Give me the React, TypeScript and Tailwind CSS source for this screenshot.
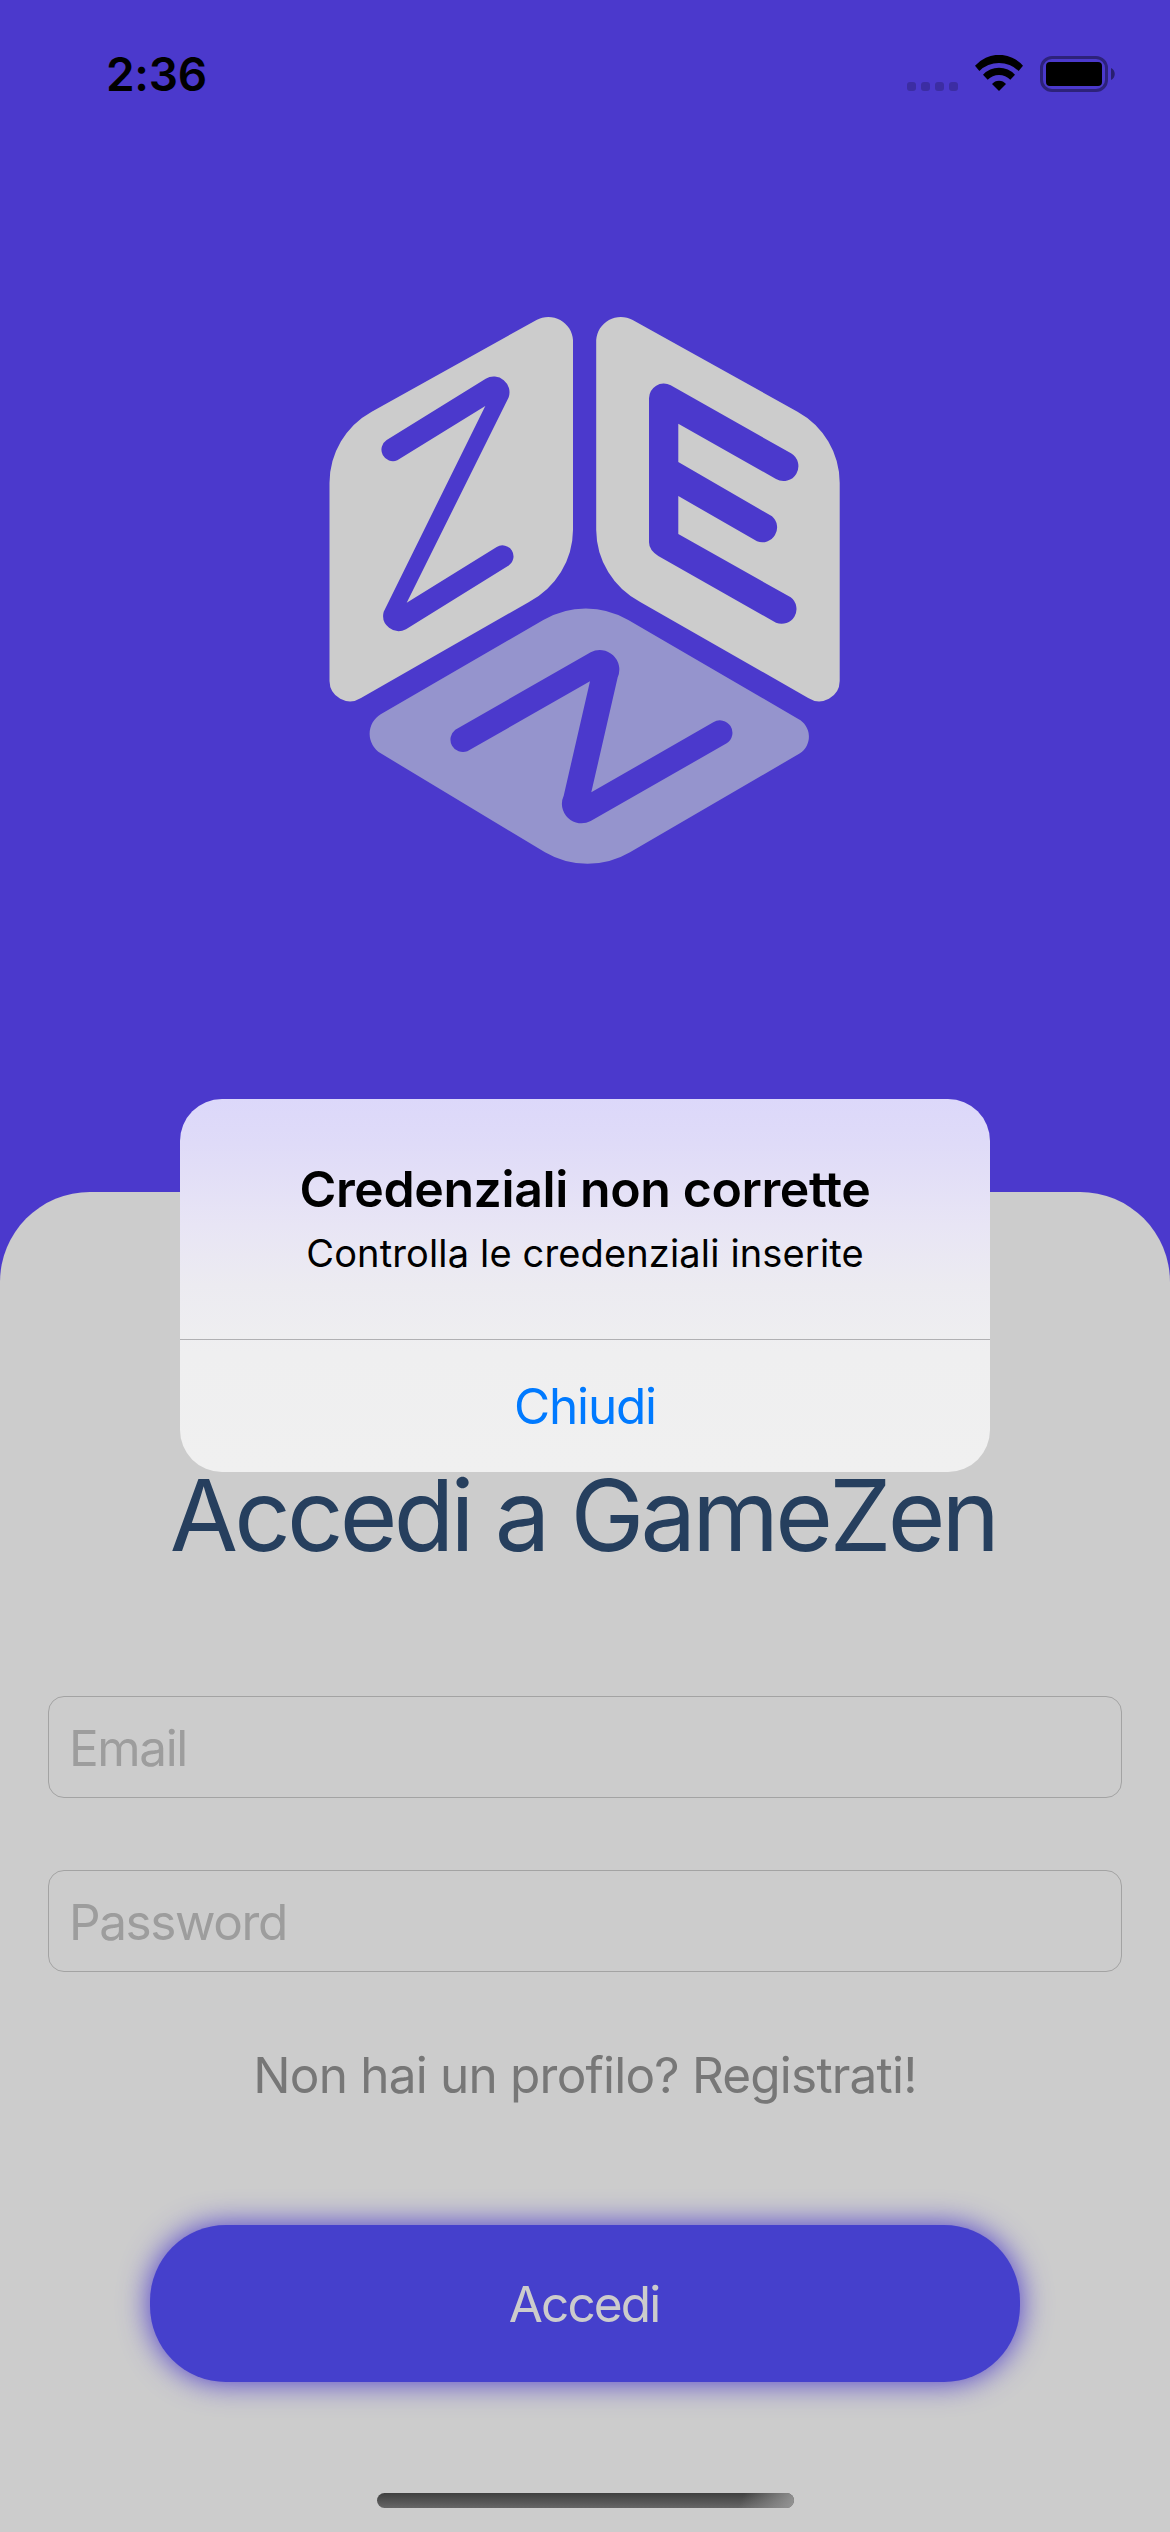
function StatusBar() {
  return (
    <div className="flex h-[148px] items-center justify-between pl-[106px] pr-[55px]">
      <span className="text-[46px] font-semibold leading-[60px] tracking-[-0.3px] text-black">2:36</span>
      <div className="flex items-center">
        <div className="mr-[17px] mt-[24px] flex gap-[5px]">
          {[0, 1, 2, 3].map((i) => (
            <span key={i} className="size-[9px] rounded-[3px] bg-black/20" />
          ))}
        </div>
        <svg width="48" height="36" viewBox="0 0 48 36" className="mr-[17px] mt-[-2px]">
          <path d="M0 10.8A31.7 31.7 0 0 1 48 10.8L43.6 16A28 28 0 0 0 4.4 16Z" />
          <path d="M8 19.7A21.8 21.8 0 0 1 40 19.7L35.3 24.7A16 16 0 0 0 12.7 24.7Z" />
          <path d="M17 29A9 9 0 0 1 31 29L24 36Z" />
        </svg>
        <div className="flex h-[36px] w-[68px] rounded-[12px] border-[3px] border-black/40 p-[3px]">
          <span className="flex-1 rounded-[4px] bg-black" />
        </div>
        <svg width="4" height="12" viewBox="0 0 4 12" className="ml-[3px]">
          <path d="M0 0C5 2 5 10 0 12Z" fillOpacity="0.45" />
        </svg>
      </div>
    </div>
  );
}

function Logo() {
  const face =
    "M329.5 483A81.5 81.5 0 0 1 371.7 411.7L536.5 320A24.7 24.7 0 0 1 573 340V530A82 82 0 0 1 529 602L361 698A20.5 20.5 0 0 1 329.5 681Z";
  return (
    <svg width="530" height="580" viewBox="320 300 530 580">
      <path d={face} fill="#cccccc" />
      <path d={face} fill="#cccccc" transform="matrix(-1 0 0 1 1169.2 0)" />
      <path
        d="M543.3 620A84 84 0 0 1 628.3 620L798.3 719A20 20 0 0 1 800 753.3L630 852.3A84 84 0 0 1 545 852.3L380.7 753.3A22.7 22.7 0 0 1 380.7 714.3Z"
        fill="#9594cd"
      />
      <g fill="#4b39cc">
        <path d="M386.7 440L485.7 378.7A15.8 15.8 0 0 1 508.6 397.6L406.7 602.7L496.7 547A11 11 0 0 1 508.3 565.7L406 629.3A15.5 15.5 0 0 1 383.7 611.7L485.3 406L397.3 460.3A11.5 11.5 0 0 1 386.7 440Z" />
        <path d="M649 398.3A14.8 14.8 0 0 1 670.7 385.3L791 453.3A14.8 14.8 0 0 1 776 479L678.3 423.7V462L772 516.3A14.8 14.8 0 0 1 757 541.3L678.3 496V534L790.7 597.3A14.8 14.8 0 0 1 776 622.7L658.3 556Q649 550 649 542.3Z" />
        <path d="M455.3 729.7L590.7 652.3A19.5 19.5 0 0 1 617.7 677.3L591.3 792.3L713.3 722.3A12.3 12.3 0 0 1 726.7 743.3L590.7 821A19.5 19.5 0 0 1 563.7 795.7L590 681.3L467.3 751.3A12.5 12.5 0 0 1 455.3 729.7Z" />
      </g>
    </svg>
  );
}

function Field({ label }: { label: string }) {
  return (
    <div className="flex h-[102px] w-full items-center rounded-[16px] border border-[#a3a3a3] pl-[20px] pt-[2px] text-[49.5px] leading-[60px] tracking-[-1.4px] text-[#9d9d9d]">
      {label}
    </div>
  );
}

function HomeIndicator() {
  return (
    <div className="mt-[111px] h-[15px] w-[417px] overflow-hidden rounded-full bg-linear-to-b from-[#404040] to-[#666666]">
      <div className="ml-auto h-full w-[64px] bg-[linear-gradient(110deg,transparent_20%,#959595_100%)]" />
    </div>
  );
}

function LoginPanel() {
  return (
    <div className="flex h-[1340px] flex-col items-center rounded-t-[90px] bg-[#cccccc] px-[48px] pt-[263px]">
      <h1 className="whitespace-nowrap pr-[4px] text-[99px] leading-[120px] tracking-[-3.8px] text-[#263f5e]">Accedi a GameZen</h1>
      <div className="mt-[121px] flex w-full flex-col gap-[72px]">
        <Field label="Email" />
        <Field label="Password" />
      </div>
      <p className="mt-[73px] whitespace-nowrap text-[49.5px] leading-[60px] tracking-[-0.8px] text-[#777777]">
        Non hai un profilo? Registrati!
      </p>
      <button className="mt-[120px] h-[157px] w-[870px] rounded-[76px] bg-[#4540cc] pr-[2px] text-[49.5px] leading-[60px] tracking-[-1.9px] text-[#cccccc] shadow-[0_0_30px_#4b39cc]">
        Accedi
      </button>
      <HomeIndicator />
    </div>
  );
}

function Alert() {
  return (
    <div className="absolute left-[180px] top-[1099px] flex h-[373px] w-[810px] flex-col overflow-hidden rounded-[42px] bg-[linear-gradient(180deg,#dcd8fa_0%,#dfdbf8_12%,#e8e5f5_34%,#ecebf1_50%,#efeff0_68%,#f0f0f0_100%)]">
      <div className="flex h-[240px] flex-col items-center pt-[60px] text-black">
        <h2 className="whitespace-nowrap text-[50px] font-semibold leading-[60px] tracking-[-0.4px]">Credenziali non corrette</h2>
        <p className="mt-[11px] whitespace-nowrap text-[38px] leading-[46px] tracking-[0.15px]">Controlla le credenziali inserite</p>
      </div>
      <button className="flex-1 border-t border-[#b0b0b3] text-[49.5px] leading-[60px] tracking-[-1.2px] text-[#007aff]">Chiudi</button>
    </div>
  );
}

export default function App() {
  return (
    <div className="relative h-[2532px] w-[1170px] overflow-hidden bg-[#4b39cc] font-['Inter',sans-serif]">
      <div className="flex h-[1192px] flex-col">
        <StatusBar />
        <div className="mt-[152px] flex justify-center">
          <Logo />
        </div>
      </div>
      <LoginPanel />
      <Alert />
    </div>
  );
}
